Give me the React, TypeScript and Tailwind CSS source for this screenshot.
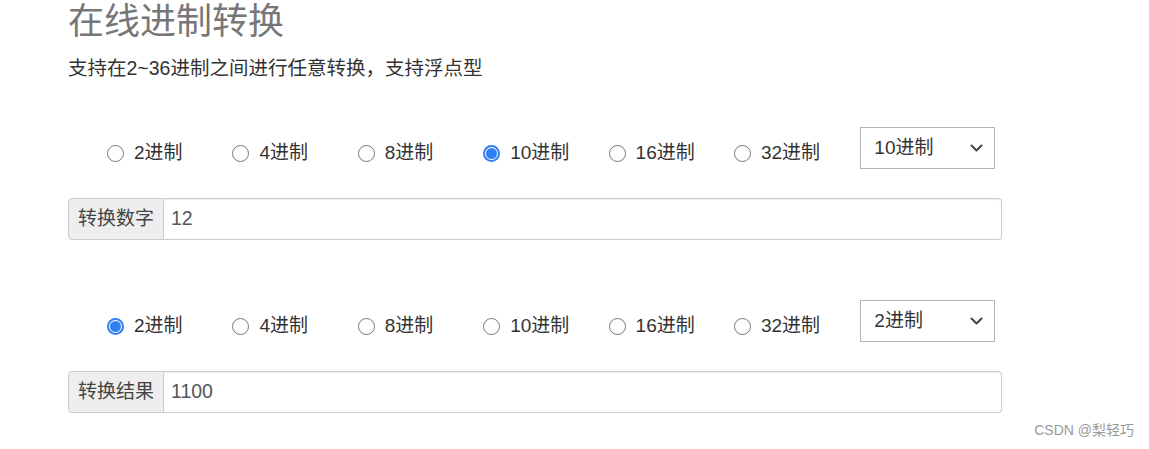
import React from "react";

const bases = [2, 4, 8, 10, 16, 32];

function Radio({ checked }: { checked: boolean }) {
  return checked ? (
    <span className="flex h-[17px] w-[17px] shrink-0 items-center justify-center rounded-full bg-[#2f7ff0]">
      <span className="flex h-[13px] w-[13px] items-center justify-center rounded-full bg-white">
        <span className="h-[11px] w-[11px] rounded-full bg-[#2f7ff0]" />
      </span>
    </span>
  ) : (
    <span className="h-[17px] w-[17px] shrink-0 rounded-full border-[1.5px] border-[#767676] bg-white" />
  );
}

function RadioRow({ selected }: { selected: number }) {
  return (
    <div className="flex items-start pl-[39px]">
      {bases.map((b) => (
        <label key={b} className="flex w-[125.4px] items-center gap-[10px] pt-[16px] text-[19px] leading-[20px] text-[#333]">
          <Radio checked={b === selected} />
          <span>{b}进制</span>
        </label>
      ))}
      <div className="ml-[1px] flex h-[42px] w-[135px] items-center justify-between border border-[#b4b4b4] bg-white pl-[13px] pr-[11px] text-[19px] text-[#333]">
        <span>{selected}进制</span>
        <svg width="13" height="8" viewBox="0 0 13 8" fill="none">
          <path d="M1.5 1.5 L6.5 6.5 L11.5 1.5" stroke="#444" strokeWidth="2" strokeLinecap="round" strokeLinejoin="round" />
        </svg>
      </div>
    </div>
  );
}

function InputGroup({ label, value }: { label: string; value: string }) {
  return (
    <div className="flex h-[42px] w-[934px] text-[19px]">
      <div className="flex items-center rounded-l-[4px] border border-[#ccc] bg-[#eee] px-[9px] text-[#444]">
        {label}
      </div>
      <div className="flex flex-1 items-center rounded-r-[4px] border border-l-0 border-[#ccc] bg-white px-[7px] text-[19.5px] text-[#555] shadow-[inset_0_1px_1px_rgba(0,0,0,0.075)]">
        {value}
      </div>
    </div>
  );
}

export default function App() {
  return (
    <div
      className="relative h-[449px] w-full overflow-hidden bg-white"
      style={{ fontFamily: '"Liberation Sans", "Noto Sans CJK SC", sans-serif' }}
    >
      <div className="pl-[68px]">
        <h1 className="m-0 pt-[2px] text-[36px] leading-[40px] font-normal text-[#777]">在线进制转换</h1>
        <p className="mt-[14px] text-[19.5px] leading-[24px] text-[#333]">支持在2~36进制之间进行任意转换，支持浮点型</p>
        <div className="mt-[47px]">
          <RadioRow selected={10} />
        </div>
        <div className="mt-[29px]">
          <InputGroup label="转换数字" value="12" />
        </div>
        <div className="mt-[60px]">
          <RadioRow selected={2} />
        </div>
        <div className="mt-[29px]">
          <InputGroup label="转换结果" value="1100" />
        </div>
      </div>
      <div className="absolute right-[15px] bottom-[8px] text-[14px] text-[#999]">CSDN @梨轻巧</div>
    </div>
  );
}
